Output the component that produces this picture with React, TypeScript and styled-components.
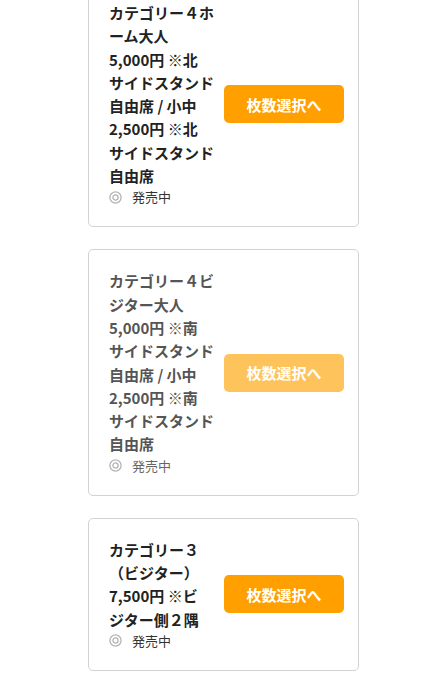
import React from 'react';
import styled, { createGlobalStyle } from 'styled-components';

const GlobalStyle = createGlobalStyle`
  html, body {
    margin: 0;
    padding: 0;
    background: #ffffff;
  }
  body {
    font-family: "Noto Sans CJK JP", "Noto Sans", sans-serif;
    color: #222;
  }
`;

type Ticket = {
  lines: string[];
  status: string;
  muted?: boolean;
};

const tickets: Ticket[] = [
  {
    lines: [
      'カテゴリー４ホ',
      'ーム大人',
      '5,000円 ※北',
      'サイドスタンド',
      '自由席 / 小中',
      '2,500円 ※北',
      'サイドスタンド',
      '自由席',
    ],
    status: '発売中',
  },
  {
    lines: [
      'カテゴリー４ビ',
      'ジター大人',
      '5,000円 ※南',
      'サイドスタンド',
      '自由席 / 小中',
      '2,500円 ※南',
      'サイドスタンド',
      '自由席',
    ],
    status: '発売中',
    muted: true,
  },
  {
    lines: ['カテゴリー３', '（ビジター）', '7,500円 ※ビ', 'ジター側２隅'],
    status: '発売中',
  },
];

const StatusIcon: React.FC = () => (
  <svg width="13" height="13" viewBox="0 0 13 13">
    <circle cx="6.5" cy="6.5" r="5.6" fill="none" stroke="#b4b4b4" strokeWidth="1.3" />
    <circle cx="6.5" cy="6.5" r="2.6" fill="none" stroke="#b4b4b4" strokeWidth="1.3" />
  </svg>
);

const App: React.FC = () => {
  return (
    <>
      <GlobalStyle />
      <List>
        {tickets.map((t, i) => (
          <Card key={i}>
            <Info>
              <Name $muted={t.muted}>
                {t.lines.map((line, j) => (
                  <span key={j}>{line}</span>
                ))}
              </Name>
              <Status $muted={t.muted}>
                <StatusIcon />
                {t.status}
              </Status>
            </Info>
            <SelectButton $muted={t.muted}>枚数選択へ</SelectButton>
          </Card>
        ))}
      </List>
    </>
  );
};

const List = styled.div`
  display: flex;
  flex-direction: column;
  gap: 22px;
  width: 271px;
  margin: -19px 0 0 88px;
  padding-bottom: 20px;
`;

const Card = styled.div`
  display: flex;
  align-items: center;
  gap: 8px;
  padding: 19px 14px 19px 20px;
  border: 1px solid #d2d2d2;
  border-radius: 5px;
  background: #fff;
`;

const Info = styled.div`
  width: 107px;
  flex-shrink: 0;
`;

const Name = styled.div<{ $muted?: boolean }>`
  display: flex;
  flex-direction: column;
  font-size: 15px;
  line-height: 23.3px;
  font-weight: 700;
  white-space: nowrap;
  color: ${(p) => (p.$muted ? '#555' : '#222')};
`;

const Status = styled.div<{ $muted?: boolean }>`
  display: flex;
  align-items: center;
  gap: 10px;
  font-size: 13px;
  line-height: 20px;
  color: ${(p) => (p.$muted ? '#666' : '#333')};
`;

const SelectButton = styled.button<{ $muted?: boolean }>`
  width: 120px;
  height: 38px;
  border: none;
  border-radius: 5px;
  background: ${(p) => (p.$muted ? '#ffc35c' : '#ff9f00')};
  color: #fff;
  font-family: "Noto Sans CJK JP", sans-serif;
  font-size: 15px;
  font-weight: 700;
  cursor: pointer;
`;

export default App;
